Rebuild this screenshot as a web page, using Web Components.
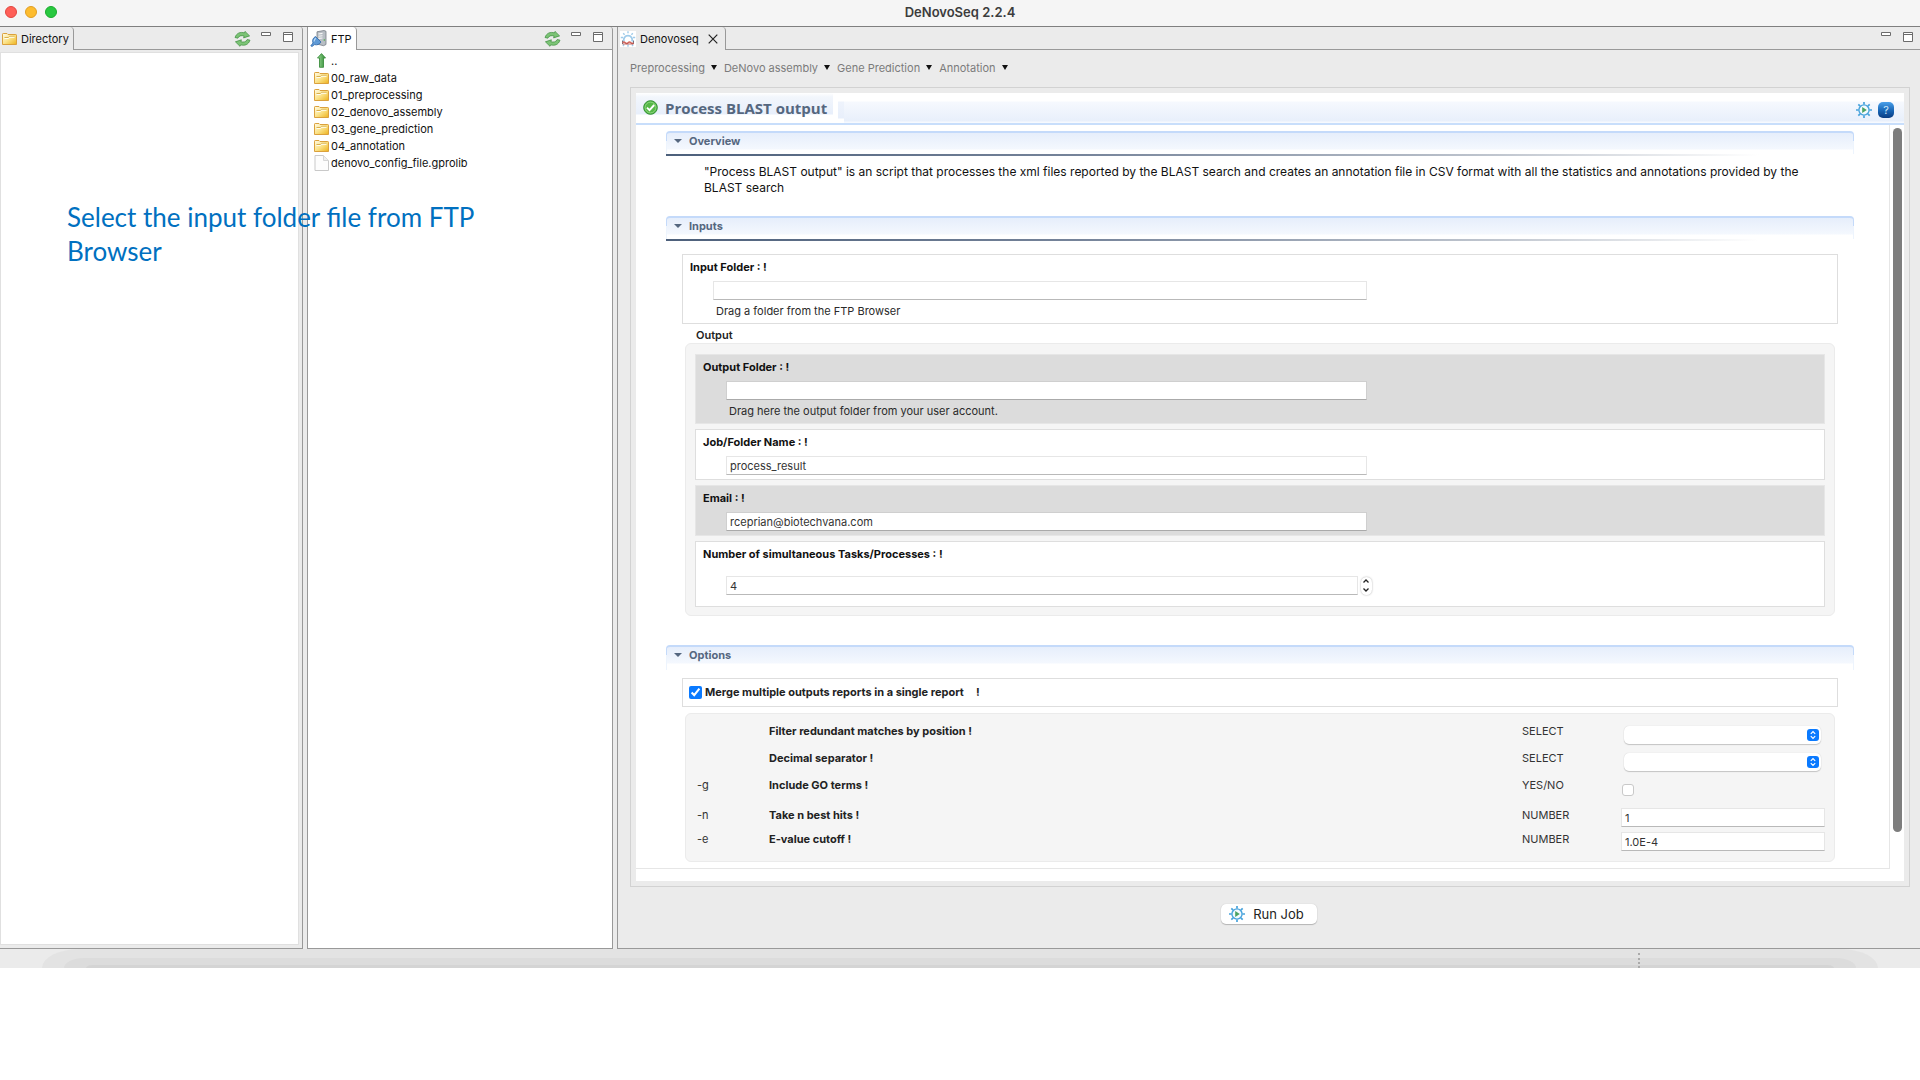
<!DOCTYPE html>
<html lang="en">
<head>
<meta charset="utf-8">
<title>DeNovoSeq 2.2.4</title>
<style>
  body { margin: 0; background: #fff; font: 11px/16px Inter, "Liberation Sans", sans-serif; color: #1c1c1c; }
</style>
</head>
<body>
<app-window></app-window>

<script>
const ICONS = {
  folder: `<svg width="15" height="13" viewBox="0 0 15 13"><defs><linearGradient id="f" x1="0" y1="0" x2="1" y2="1"><stop offset="0" stop-color="#fffbe6"/><stop offset=".5" stop-color="#fbe38a"/><stop offset="1" stop-color="#edb21c"/></linearGradient></defs><path d="M.5 12.5V2.2Q.5 1.5 1.2 1.5H5l1 1h7.8q.7 0 .7.7v9.3z" fill="url(#f)" stroke="#dba13c"/><path d="M2.5 5.5h4l1-1.2h5" fill="none" stroke="#d9b04c"/><path d="M2.5 6.5h4l1-1.2h5" fill="none" stroke="#fffdf0"/></svg>`,
  file: `<svg width="15" height="16" viewBox="0 0 15 16"><path d="M1 .5h8.500l5 5v10H1z" fill="#fdfdfd" stroke="#c9c9c9"/><path d="M9.500.5v5h5" fill="#f0f0f0" stroke="#d6d6d6"/></svg>`,
  up: `<svg width="15" height="15" viewBox="0 0 15 15"><defs><linearGradient id="u" x1="0" x2="1"><stop offset="0" stop-color="#9ad794"/><stop offset="1" stop-color="#2f8b34"/></linearGradient></defs><path d="M7.500.6 11.500 5H9.500v9.300H5.500V5h-2z" fill="url(#u)" stroke="#3d8f40" stroke-width=".9"/></svg>`,
  refresh: `<svg width="17" height="16" viewBox="0 0 17 16"><g fill="#7cc476" stroke="#3a8b3b" stroke-width=".7" stroke-linejoin="round"><path d="M1 6.500C2.500 2 6.500.6 10.300 1.900L11 .400 15.600 4.900l-6 2 .5-1.900C7.500 4.200 4.800 4.700 3.800 7.200z"/><path d="M16 9.200c-1.500 4.500-5.500 5.900-9.300 4.600l-.7 1.500L1.400 10.800l6-2-.5 1.900c2.600.8 5.300.3 6.300-2.200z"/></g></svg>`,
  server: `<svg width="17" height="17" viewBox="0 0 17 17"><path d="M7 1.800 14 .5l2 .8v13.200l-2.500 1.200L7 14z" fill="#b8bec4" stroke="#777e86" stroke-width=".8"/><path d="M8.500 4l4-.6M8.500 6.200l4-.5M8.500 8.400l4-.4" stroke="#f7f7f7" stroke-width="1.100"/><circle cx="14.300" cy="10" r=".8" fill="#46b346"/><path d="M.8 15.800 3 13C2 10 3 8 5.500 6.500L11 12c-1.500 2.500-4 3.300-6.500 2.600L2 16.500z" fill="#5f9ad6" stroke="#2c66a8" stroke-width=".8"/><path d="M4 11.500c.2-1.500.8-2.500 1.800-3.200" fill="none" stroke="#b9d8f4" stroke-width="1.200"/></svg>`,
  dna: `<svg width="16" height="16" viewBox="0 0 16 16"><path d="M0 0h16v16H0z" fill="#fff"/><path d="M4 10.500a4.300 4.300 0 1 1 8 0" fill="none" stroke="#9fcbea" stroke-width="1.800"/><path d="M8 .3v2M3.200 2.300l1.400 1.400M12.800 2.300l-1.400 1.400M.8 6.500h2.200M13 6.500h2.200M8 13.500v2.200M4 13.500l-1 1.500M12 13.500l1 1.500" stroke="#9fcbea" stroke-width="1.400"/><path d="M2.500 9.500v3.500M13.500 9.500v3.500" stroke="#6c7280"/><path d="M2.500 11.700q1.400-1.400 2.800 0t2.800 0 2.800 0 2.600 0" fill="none" stroke="#d2635a" stroke-width="1.400"/><path d="M2.500 13h11" stroke="#b04a44" stroke-width=".8"/></svg>`,
  gear: `<svg width="16" height="16" viewBox="0 0 16 16"><g stroke="#48a3dc" stroke-width="1.700"><path d="M8 0v2.600M8 13.400V16M0 8h2.600M13.400 8H16M2.300 2.300 4.200 4.200M11.800 11.800l1.900 1.900M2.300 13.700l1.900-1.900M11.800 4.200l1.900-1.900"/></g><circle cx="8" cy="8" r="5.100" fill="#f4fafe" stroke="#48a3dc" stroke-width="1.400"/><path d="M6.200 5v6l4.600-3z" fill="#4ba363"/></svg>`,
  ok: `<svg width="15" height="15" viewBox="0 0 15 15"><circle cx="7.500" cy="7.500" r="6.800" fill="#56b848" stroke="#2f8f30"/><circle cx="7.500" cy="7.500" r="5.400" fill="none" stroke="#9bdc8c" stroke-width=".8"/><path d="m4 7.700 2.500 2.500L11.200 5" fill="none" stroke="#fff" stroke-width="1.900"/></svg>`,
  min: `<svg width="10" height="4" viewBox="0 0 10 4"><path d="M.5.500h9v3h-9z" fill="#fff" stroke="#6b6b6b"/></svg>`,
  max: `<svg width="10" height="10" viewBox="0 0 10 10"><path d="M.5.500h9v9h-9z" fill="#fff" stroke="#6b6b6b"/><path d="M0 2.500h10" stroke="#6b6b6b"/></svg>`,
  close: `<svg width="10" height="10" viewBox="0 0 10 10"><path d="m.7.700 8.600 8.600M9.300.700.7 9.300" stroke="#222" stroke-width="1.200"/></svg>`,
  tri: `<svg width="6" height="5" viewBox="0 0 6 5"><path d="M0 0h6L3 5z" fill="currentColor"/></svg>`,
  twist: `<svg width="8" height="4" viewBox="0 0 8 4"><path d="M0 0h8L4 4z" fill="currentColor"/></svg>`
};

const BASE = `
  *, *::before { box-sizing: border-box; }
  svg { display: block; flex: none; }
  button { font: inherit; color: inherit; background: none; border: 0; padding: 0; margin: 0; display: block; }
  input, select { font: inherit; color: #333; margin: 0; min-width: 0; }
  .text { height: 19px; width: 100%; padding: 0 3px; border: 1px solid #e6e6e6; border-bottom-color: #b9b9b9; border-radius: 0; background: #fff; outline: 0; }
`;

function define(name, render) {
  customElements.define(name, class extends HTMLElement {
    connectedCallback() {
      if (this.shadowRoot) return;
      const t = document.createElement('template');
      t.innerHTML = render(this);
      this.attachShadow({ mode: 'open' }).append(t.content.cloneNode(true));
    }
  });
}

define('ui-icon', el => `<style>:host { display: block; flex: none; } svg { display: block; }</style>${ICONS[el.getAttribute('name')]}`);

define('title-bar', el => `<style>${BASE}
  :host { display: grid; grid-template-columns: 1fr auto 1fr; align-items: center; height: 27px; padding: 0 5px 2px; box-sizing: border-box; background: #f5f5f5; border-bottom: 1px solid #7f7f7f; }
  .lights { display: flex; gap: 8px; }
  .lights button { width: 12px; height: 12px; border-radius: 50%; background: #ff5f57; border: 1px solid #e2463f; }
  .lights .y { background: #fdbc2e; border-color: #e09e22; }
  .lights .g { background: #28c840; border-color: #1aab2c; }
  h1 { margin: 0; font-size: 13px; font-weight: 600; color: #3c3c3c; }
</style>
<div class="lights"><button aria-label="Close"></button><button class="y" aria-label="Minimize"></button><button class="g" aria-label="Zoom"></button></div>
<h1><slot></slot></h1>`);

/* A workbench pane: tab strip on top, content slotted beneath. */
define('view-pane', el => `<style>${BASE}
  :host { display: flex; flex-direction: column; min-width: 0; box-sizing: border-box; background: #ebebeb; border: 1px solid #999; border-top: 0; border-radius: 0 3px 0 0; }
  :host(:first-child) { border-left: 0; }
  :host(:last-child) { border-right: 0; }
  .strip { display: flex; height: 23px; flex: none; }
  .tab { display: flex; align-items: center; gap: 4px; padding: 0 4px 0 2px; border-right: 1px solid #999; border-radius: 0 4px 0 0; color: #111; }
  .tab button { margin: 0 3px 0 5px; }
  :host([tone=white]) .tab, :host([tone=white]) .body { background: #fff; }
  .tools { flex: 1; display: flex; gap: 12px; justify-content: flex-end; align-items: flex-start; padding: 4px 9px 0 0; border-bottom: 1px solid #999; }
  .tools button { padding-top: 1px; }
  .tools .r { padding: 0; margin-right: -2px; }
  :host(:last-child) .tools { padding-right: 7px; }
  .body { flex: 1; display: flex; flex-direction: column; min-width: 0; }
  :host([tone=inset]) .body { background: #fff; margin: 2px 3px 3px 0; border: 1px solid #e0e0e0; }
</style>
<div class="strip"><div class="tab"><ui-icon name="${el.getAttribute('icon')}"></ui-icon><span>${el.getAttribute('label')}</span>${el.hasAttribute('closable') ? '<button aria-label="Close tab"><ui-icon name="close"></ui-icon></button>' : ''}</div>
<div class="tools">${el.hasAttribute('refresh') ? '<button class="r" aria-label="Refresh"><ui-icon name="refresh"></ui-icon></button>' : ''}<button aria-label="Minimize view"><ui-icon name="min"></ui-icon></button><button aria-label="Maximize view"><ui-icon name="max"></ui-icon></button></div></div>
<div class="body"><slot></slot></div>`);

define('file-row', el => `<style>
  :host { display: flex; align-items: center; gap: 2px; height: 17px; color: #111; }
</style><ui-icon name="${el.getAttribute('icon') || 'folder'}"></ui-icon><span><slot></slot></span>`);

define('menu-bar', el => `<style>${BASE}
  :host { display: flex; gap: 7px; height: 37px; align-items: center; padding: 0 0 2px 12px; box-sizing: border-box; color: #7b7b7b; }
  button { display: flex; align-items: center; gap: 6px; }
  ui-icon { color: #111; }
</style>${el.getAttribute('items').split(',').map(t => `<button>${t}<ui-icon name="tri"></ui-icon></button>`).join('')}`);

define('form-page', el => `<style>${BASE}
  :host { display: block; margin: 0 10px 0 12px; padding: 5px; border: 1px solid #d2d2d2; }
  .page { background: #fff; padding-bottom: 12px; }
  header { display: flex; height: 32px; border-bottom: 2px solid #c8defb; background: linear-gradient(#fff 8px, #f6f9fe 9px, #e8effb 28px, #f6f9fe 29px); }
  .title { display: flex; gap: 7px; padding: 0 6px 0 7px; background: linear-gradient(#fff, #f2f6fc 4px, #e8effb 21px, #fff 22px); }
  .title ui-icon { padding-top: 7px; }
  h2 { margin: 0; font: 700 15px/31px "Open Sans", sans-serif; color: #55677f; }
  .grip { width: 11px; border-left: 5px solid #fff; background: linear-gradient(#fff 8px, #eef3fc 9px, #e8effb 25px, #fff 26px); }
  .acts { flex: 1; display: flex; justify-content: flex-end; align-items: center; gap: 6px; padding: 4px 10px 0 0; }
  .help { width: 16px; height: 16px; border-radius: 5px; background: linear-gradient(#4aa0ea, #1764b4 55%, #0a3c82); color: #cfe6fa; font-size: 11px; line-height: 16px; text-align: center; }
  .scroll { display: flex; }
  .content { flex: 1; min-width: 0; padding: 6px 35px 6px 30px; border: solid #e6e6e6; border-width: 0 1px 1px 0; }
  .bar { width: 14px; padding: 3px 2px 37px 3px; }
  .thumb { height: 100%; border-radius: 5px; background: #7d7d7d; }
</style>
<div class="page"><header><div class="title"><ui-icon name="ok"></ui-icon><h2>${el.getAttribute('heading')}</h2></div><div class="grip"></div>
<div class="acts"><button aria-label="Run"><ui-icon name="gear"></ui-icon></button><button class="help">?</button></div></header>
<div class="scroll"><div class="content"><slot></slot></div><div class="bar"><div class="thumb"></div></div></div></div>`);

define('form-section', el => `<style>${BASE}
  :host { display: block; }
  .head { display: flex; align-items: center; gap: 7px; width: 100%; height: 25px; padding: 0 7px 8px; border: 1px solid #c4dafa; border-width: 2px 1px 0; border-radius: 4px 4px 0 0; background: linear-gradient(#e6eefb, #f4f8fe 16px, #fff 17px); color: #55677f; font-weight: 700; position: relative; }
  .head::before { content: ""; position: absolute; inset: 8px -1px 0; border: solid #fff; border-width: 0 1px; opacity: .7; }
  .rule { height: 2px; margin-top: -2px; position: relative; background: linear-gradient(90deg, #4d607b, #76849a 35%, #c0c6cf 70%, #fff 92%); }
  :host([plain]) .rule { visibility: hidden; }
  .in { padding: 13px 16px 0; }
  :host([tight]) .in { padding-top: 8px; }
</style>
<button class="head" aria-expanded="true"><ui-icon name="twist"></ui-icon>${el.getAttribute('label')}</button><div class="rule"></div><div class="in"><slot></slot></div>`);

/* Labelled text box inside a bordered card, with an optional hint below it. */
define('field-box', el => {
  const spin = el.hasAttribute('spin'), hint = el.getAttribute('hint');
  return `<style>${BASE}
  :host { display: block; box-sizing: border-box; background: #fff; border: 1px solid #dedede; padding: 4px 7px; }
  :host([dark]) { background: #dcdcdc; border-color: #e6e6e6; }
  :host([dark]) .text { border-color: #cfcfcf; border-bottom-color: #aaa; }
  label { display: block; font-weight: 700; color: #111; }
  .line { display: grid; grid-template-columns: var(--line, 640fr 450fr); padding-left: 23px; margin-top: 6px; }
  .ctl { display: flex; align-items: center; gap: 3px; }
  .hint { margin-top: 3px; padding-left: 26px; color: #2a2a2a; }
  .step { margin-right: -5px; width: 11px; height: 18px; flex: none; border-radius: 6px; background: #fff; box-shadow: 0 0 2px #aaa; }
  .step button { width: 11px; height: 9px; display: grid; place-items: center; }
  :host([spin]) .line { margin-top: 14px; }
  :host([spin]) { padding-bottom: 11px; }
</style>
<label for="f">${el.getAttribute('label')}</label>
<div class="line"><div class="ctl"><input class="text" id="f" type="text" value="${el.getAttribute('value') || ''}">${spin ? '<div class="step"><button aria-label="Increase"><svg width="6" height="4"><path d="M.5 3.500 3 1l2.500 2.500" fill="none" stroke="#222" stroke-width="1.300"/></svg></button><button aria-label="Decrease"><svg width="6" height="4"><path d="M.5.500 3 3 5.500.500" fill="none" stroke="#222" stroke-width="1.300"/></svg></button></div>' : ''}</div></div>
${hint ? `<div class="hint">${hint}</div>` : ''}`;
});

define('field-group', el => `<style>${BASE}
  :host { display: block; }
  .cap { padding: 4px 0 0 14px; line-height: 15px; color: #222; font-weight: 600; }
  .box { margin: 0 3px; padding: var(--pad, 10px 9px 8px); background: #f5f5f5; border: 1px solid #ebebeb; border-radius: 6px; display: flex; flex-direction: column; gap: var(--gap, 5px); }
</style>${el.hasAttribute('label') ? `<div class="cap">${el.getAttribute('label')}</div>` : ''}<div class="box"><slot></slot></div>`);

define('check-line', el => `<style>${BASE}
  :host { display: flex; align-items: center; box-sizing: border-box; height: 29px; padding: 0 6px 1px; border: 1px solid #dedede; margin-bottom: 6px; font-weight: 700; color: #222; }
  input { width: 13px; height: 13px; accent-color: #0a7aff; margin-right: 3px; }
  span { margin-left: 12px; }
</style><input type="checkbox" id="c" checked><label for="c">${el.getAttribute('label')}</label><span>!</span>`);

define('option-row', el => {
  const kind = el.getAttribute('kind'), v = el.getAttribute('value') || '';
  const ctl = {
    SELECT: `<div class="sel"><select id="o"><option></option></select><svg width="12" height="12" viewBox="0 0 12 12"><rect width="12" height="12" rx="3" fill="#0a7aff"/><path d="M3.800 4.800 6 2.600l2.200 2.200M3.800 7.200 6 9.400l2.200-2.200" fill="none" stroke="#fff" stroke-width="1.200"/></svg></div>`,
    'YES/NO': `<input class="chk" id="o" type="checkbox">`,
    NUMBER: `<input class="text" id="o" type="text" inputmode="decimal" value="${v}">`
  }[kind];
  return `<style>${BASE}
  :host { display: grid; grid-template-columns: 72px 1fr 99px 204px; line-height: 20px; color: #333; height: 24px; }
  :host([kind=SELECT]) { height: 27px; }
  :host([kind="YES/NO"]) { height: 30px; }
  label { font-weight: 700; color: #222; }
  .c { padding-top: 3px; }
  .sel { position: relative; margin: 2px 4px 0 3px; }
  select { appearance: none; display: block; width: 100%; height: 18px; border: 0; border-radius: 5px; background: #fff; box-shadow: 0 1px 1px #c4c4c4, 0 0 1px #ccc; }
  .sel svg { position: absolute; right: 2px; top: 3px; pointer-events: none; }
  .chk { appearance: none; display: block; width: 12px; height: 12px; margin: 6px 0 0 1px; border: 1px solid #c9c9c9; border-radius: 3px; background: #fff; }
  .text { display: block; }
</style><span>${el.getAttribute('flag') || ''}</span><label for="o">${el.getAttribute('label')} !</label><span>${kind}</span><div class="c">${ctl}</div>`;
});

define('run-bar', el => `<style>${BASE}
  :host { display: flex; justify-content: center; padding: 17px 0 24px; }
  button { display: flex; align-items: center; gap: 8px; height: 20px; padding: 0 13px 0 8px; border-radius: 5px; background: #fff; box-shadow: 0 1px 1px #b4b4b4, 0 0 1px #bbb; font-size: 13px; color: #222; }
</style><button><ui-icon name="gear"></ui-icon><slot></slot></button>`);

define('status-bar', el => `<style>${BASE}
  :host { display: block; height: 19px; overflow: hidden; background: #ebebeb; position: relative; }
  .a, .b, .c { border-radius: 48px 48px 0 0 / 24px 24px 0 0; }
  .a { margin: 0 42px; padding: 9px 22px 0; height: 19px; background: #e3e3e3; }
  .b { height: 10px; padding: 7px 22px 0; background: #dcdcdc; }
  .c { height: 3px; background: #d4d4d4; }
  .dots { position: absolute; left: 85.3%; top: 4px; bottom: 0; border-left: 2px dotted #aaa; }
</style><div class="a"><div class="b"><div class="c"></div></div></div><div class="dots"></div>`);

define('app-window', el => `<style>
  :host { display: block; position: relative; }
  .panes { display: grid; grid-template-columns: 303fr 306fr 1303fr; gap: 4px; background: #ebebeb; }
  .list { padding: 2px 6px; }
  p { margin: 0; padding: 0 26px 0 22px; font-size: 12px; color: #111; }
  .intro { padding: 0 0 20px; }
  .inputs { padding-bottom: 29px; }
  .first { --line: 653fr 463fr; }
  .opts { --pad: 7px 9px 8px 11px; --gap: 0px; }
  .note { position: absolute; left: 67px; top: 200px; width: 410px; font: 26px/34px Lato, sans-serif; color: #0070c0; }
</style>
<title-bar>DeNovoSeq 2.2.4</title-bar>
<div class="panes">
  <view-pane tone="inset" icon="folder" label="Directory" refresh></view-pane>
  <view-pane tone="white" icon="server" label="FTP" refresh>
    <div class="list">
      <file-row icon="up">..</file-row>
      <file-row>00_raw_data</file-row>
      <file-row>01_preprocessing</file-row>
      <file-row>02_denovo_assembly</file-row>
      <file-row>03_gene_prediction</file-row>
      <file-row>04_annotation</file-row>
      <file-row icon="file">denovo_config_file.gprolib</file-row>
    </div>
  </view-pane>
  <view-pane icon="dna" label="Denovoseq" closable>
    <menu-bar items="Preprocessing,DeNovo assembly,Gene Prediction,Annotation"></menu-bar>
    <form-page heading="Process BLAST output">
      <form-section tight label="Overview">
        <div class="intro"><p>"Process BLAST output" is an script that processes the xml files reported by the BLAST search and creates an annotation file in CSV format with all the statistics and annotations provided by the BLAST search</p></div>
      </form-section>
      <form-section label="Inputs">
        <div class="inputs">
          <field-box class="first" label="Input Folder : !" hint="Drag a folder from the FTP Browser"></field-box>
          <field-group label="Output">
            <field-box dark label="Output Folder : !" hint="Drag here the output folder from your user account."></field-box>
            <field-box label="Job/Folder Name : !" value="process_result"></field-box>
            <field-box dark label="Email : !" value="rceprian@biotechvana.com"></field-box>
            <field-box spin label="Number of simultaneous Tasks/Processes : !" value="4"></field-box>
          </field-group>
        </div>
      </form-section>
      <form-section plain tight label="Options">
        <check-line label="Merge multiple outputs reports in a single report"></check-line>
        <field-group class="opts">
          <option-row label="Filter redundant matches by position" kind="SELECT"></option-row>
          <option-row label="Decimal separator" kind="SELECT"></option-row>
          <option-row flag="-g" label="Include GO terms" kind="YES/NO"></option-row>
          <option-row flag="-n" label="Take n best hits" kind="NUMBER" value="1"></option-row>
          <option-row flag="-e" label="E-value cutoff" kind="NUMBER" value="1.0E-4"></option-row>
        </field-group>
      </form-section>
    </form-page>
    <run-bar>Run Job</run-bar>
  </view-pane>
</div>
<status-bar></status-bar>
<div class="note">Select the input folder file from FTP Browser</div>`);
</script>
</body>
</html>
